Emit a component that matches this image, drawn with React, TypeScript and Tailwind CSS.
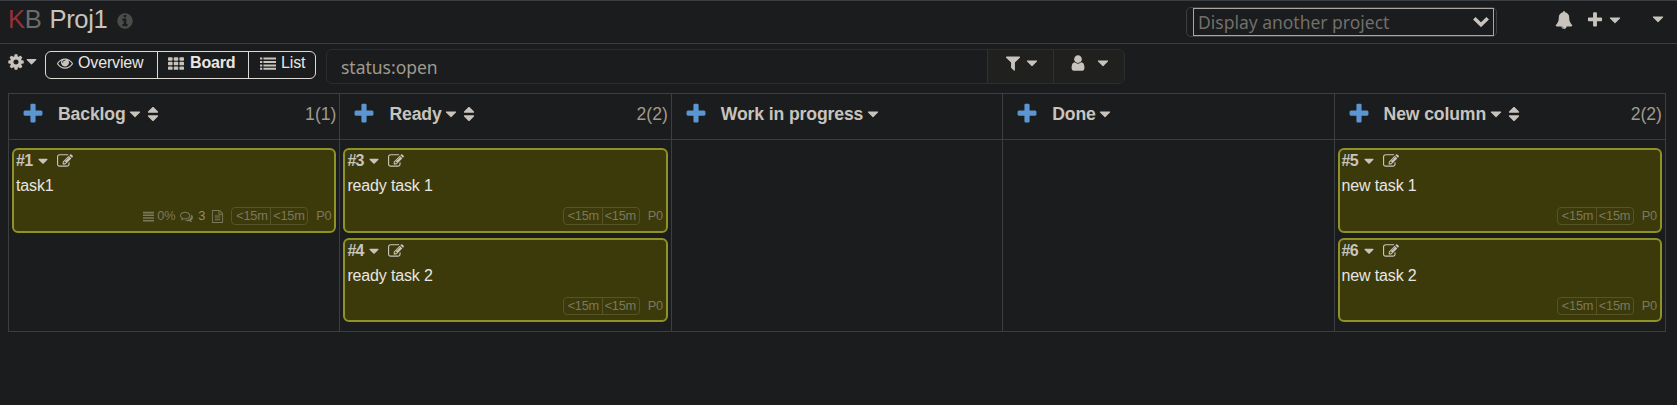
import React from "react";

const P = {
  caret: "M1408 704q0 26-19 45l-448 448q-19 19-45 19t-45-19l-448-448q-19-19-19-45t19-45 45-19h896q26 0 45 19t19 45z",
  plus: "M1600 736v192q0 40-28 68t-68 28h-416v416q0 40-28 68t-68 28h-192q-40 0-68-28t-28-68v-416h-416q-40 0-68-28t-28-68v-192q0-40 28-68t68-28h416v-416q0-40 28-68t68-28h192q40 0 68 28t28 68v416h416q40 0 68 28t28 68z",
  sort: "M1408 1088q0 26-19 45l-448 448q-19 19-45 19t-45-19l-448-448q-19-19-19-45t19-45 45-19h896q26 0 45 19t19 45zm0-384q0 26-19 45t-45 19h-896q-26 0-45-19t-19-45 19-45l448-448q19-19 45-19t45 19l448 448q19 19 19 45z",
  cog: "M1152 896q0-106-75-181t-181-75-181 75-75 181 75 181 181 75 181-75 75-181zm512-109v222q0 12-8 23t-20 13l-185 28q-19 54-39 91 35 50 107 138 10 12 10 25t-9 23q-27 37-99 108t-94 71q-12 0-26-9l-138-108q-44 23-91 38-16 136-29 186-7 28-36 28h-222q-14 0-24.5-8.5t-11.5-21.5l-28-184q-49-16-90-37l-141 107q-10 9-25 9-14 0-25-11-126-114-165-168-7-10-7-23 0-12 8-23 15-21 51-66.5t54-70.5q-27-50-41-99l-183-27q-13-2-21-12.5t-8-23.5v-222q0-12 8-23t19-13l186-28q14-46 39-92-40-57-107-138-10-12-10-24 0-10 9-23 26-36 98.5-107.5t94.5-71.5q13 0 26 10l138 107q44-23 91-38 16-136 29-186 7-28 36-28h222q14 0 24.5 8.5t11.5 21.5l28 184q49 16 90 37l142-107q9-9 24-9 13 0 25 10 129 119 165 170 7 8 7 22 0 12-8 23-15 21-51 66.5t-54 70.5q26 50 41 98l183 28q13 2 21 12.5t8 23.5z",
  eye: "M1664 960q-152-236-381-353 61 104 61 225 0 185-131.5 316.5t-316.5 131.5-316.5-131.5-131.5-316.5q0-121 61-225-229 117-381 353 133 205 333.5 326.5t434.5 121.5 434.5-121.5 333.5-326.5zm-720-384q0-20-14-34t-34-14q-125 0-214.5 89.5t-89.5 214.5q0 20 14 34t34 14 34-14 14-34q0-86 61-147t147-61q20 0 34-14t14-34zm848 384q0 34-20 69-140 230-376.5 368.5t-499.5 138.5-499.5-139-376.5-368q-20-35-20-69t20-69q140-229 376.5-368t499.5-139 499.5 139 376.5 368q20 35 20 69z",
  info: "M1152 1376v-160q0-14-9-23t-23-9h-96v-512q0-14-9-23t-23-9h-320q-14 0-23 9t-9 23v160q0 14 9 23t23 9h96v320h-96q-14 0-23 9t-9 23v160q0 14 9 23t23 9h448q14 0 23-9t9-23zm-128-896v-160q0-14-9-23t-23-9h-192q-14 0-23 9t-9 23v160q0 14 9 23t23 9h192q14 0 23-9t9-23zm640 416q0 209-103 385.5t-279.5 279.5-385.5 103-385.5-103-279.5-279.5-103-385.5 103-385.5 279.5-279.5 385.5-103 385.5 103 279.5 279.5 103 385.5z",
  edit: "M888 1184l116-116-152-152-116 116v56h96v96h56zm440-720q-16-16-33 1l-350 350q-17 17-1 33t33-1l350-350q17-17 1-33zm80 594v190q0 119-84.5 203.5t-203.5 84.5h-832q-119 0-203.5-84.5t-84.5-203.5v-832q0-119 84.5-203.5t203.5-84.5h832q63 0 117 25 15 7 18 23 3 17-9 29l-49 49q-14 14-32 8-23-6-45-6h-832q-66 0-113 47t-47 113v832q0 66 47 113t113 47h832q66 0 113-47t47-113v-126q0-13 9-22l64-64q15-15 35-7t20 29zm-96-738l288 288-672 672h-288v-288zm444 132l-92 92-288-288 92-92q28-28 68-28t68 28l152 152q28 28 28 68t-28 68z",
  bell: "M912 1696q0-16-16-16-59 0-101.5-42.5t-42.5-101.5q0-16-16-16t-16 16q0 73 51.5 124.5t124.5 51.5q16 0 16-16zm816-288q0 52-38 90t-90 38h-448q0 106-75 181t-181 75-181-75-75-181h-448q-52 0-90-38t-38-90q50-42 91-88t85-119.5 74.5-158.5 50-206 19.5-260q0-152 117-282.5t307-158.5q-8-19-8-39 0-40 28-68t68-28 68 28 28 68q0 20-8 39 190 28 307 158.5t117 282.5q0 139 19.5 260t50 206 74.5 158.5 85 119.5 91 88z",
  filter: "M1595 295q17 41-14 70l-493 493v742q0 42-39 59-13 5-25 5-27 0-45-19l-256-256q-19-19-19-45v-486l-493-493q-31-29-14-70 17-39 59-39h1280q42 0 59 39z",
  user: "M1536 1399q0 109-62.5 187t-150.5 78h-854q-88 0-150.5-78t-62.5-187q0-85 8.5-160.5t31.5-152 58.5-131 94-89 134.5-34.5q131 128 313 128t313-128q76 0 134.5 34.5t94 89 58.5 131 31.5 152 8.5 160.5zm-256-887q0 159-112.5 271.5t-271.5 112.5-271.5-112.5-112.5-271.5 112.5-271.5 271.5-112.5 271.5 112.5 112.5 271.5z",
  comments: "M704 384q-153 0-286 52t-211.5 141-78.5 191q0 82 53 158t149 132l97 56-35 84q34-20 62-39l44-31 53 10q78 14 153 14 153 0 286-52t211.5-141 78.5-191-78.5-191-211.5-141-286-52zm0-128q191 0 353.5 68.5t256.5 186.5 94 257-94 257-256.5 186.5-353.5 68.5q-86 0-176-16-124 88-278 128-36 9-86 16h-3q-11 0-20.5-8t-11.5-21q-1-3-1-6.5t.5-6.5 2-6l2.5-5 3.5-5.5 4-5 4.5-5 4-4.5q5-6 23-25t26-29.5 22.5-29 25-38.5 20.5-44q-124-72-195-177t-71-224q0-139 94-257t256.5-186.5 353.5-68.5zm822 1169q10 24 20.5 44t25 38.5 22.5 29 26 29.5 23 25q1 1 4 4.5t4.5 5 4 5 3.5 5.5l2.5 5 2 6 .5 6.5-1 6.5q-3 14-13 22t-22 7q-50-7-86-16-154-40-278-128-90 16-176 16-271 0-472-132 58 4 88 4 161 0 309-45t264-129q125-92 192-212t67-254q0-77-23-152 129 71 204 178t75 230q0 120-71 224.5t-195 176.5z",
  file: "M1596 380q28 28 48 76t20 88v1152q0 40-28 68t-68 28h-1344q-40 0-68-28t-28-68v-1600q0-40 28-68t68-28h896q40 0 88 20t76 48zm-444-244v376h376q-10-29-22-41l-313-313q-12-12-41-22zm384 1528v-1024h-416q-40 0-68-28t-28-68v-416h-768v1536h1280zm-1024-864q0-14 9-23t23-9h704q14 0 23 9t9 23v64q0 14-9 23t-23 9h-704q-14 0-23-9t-9-23v-64zm736 224q14 0 23 9t9 23v64q0 14-9 23t-23 9h-704q-14 0-23-9t-9-23v-64q0-14 9-23t23-9h704zm0 256q14 0 23 9t9 23v64q0 14-9 23t-23 9h-704q-14 0-23-9t-9-23v-64q0-14 9-23t23-9h704z",
  th: "M96 256h320q96 0 96 96v192q0 96-96 96h-320q-96 0-96-96v-192q0-96 96-96zM736 256h320q96 0 96 96v192q0 96-96 96h-320q-96 0-96-96v-192q0-96 96-96zM1376 256h320q96 0 96 96v192q0 96-96 96h-320q-96 0-96-96v-192q0-96 96-96zM96 768h320q96 0 96 96v192q0 96-96 96h-320q-96 0-96-96v-192q0-96 96-96zM736 768h320q96 0 96 96v192q0 96-96 96h-320q-96 0-96-96v-192q0-96 96-96zM1376 768h320q96 0 96 96v192q0 96-96 96h-320q-96 0-96-96v-192q0-96 96-96zM96 1280h320q96 0 96 96v192q0 96-96 96h-320q-96 0-96-96v-192q0-96 96-96zM736 1280h320q96 0 96 96v192q0 96-96 96h-320q-96 0-96-96v-192q0-96 96-96zM1376 1280h320q96 0 96 96v192q0 96-96 96h-320q-96 0-96-96v-192q0-96 96-96z",
  list: "M0 288h256v224h-256zM384 288h1408v224h-1408zM0 672h256v224h-256zM384 672h1408v224h-1408zM0 1056h256v224h-256zM384 1056h1408v224h-1408zM0 1440h256v224h-256zM384 1440h1408v224h-1408z",
  lines: "M0 130h1792v260h-1792zM0 570h1792v260h-1792zM0 1010h1792v260h-1792zM0 1450h1792v260h-1792z",
};

function Icon({ name, className = "" }: { name: keyof typeof P; className?: string }) {
  return (
    <svg viewBox="0 0 1792 1792" fill="currentColor" className={`shrink-0 overflow-visible ${className}`}>
      <path d={P[name]} />
    </svg>
  );
}

function Card({ id, title, details }: { id: number; title: string; details?: boolean }) {
  return (
    <article className="flex h-[85px] flex-col rounded-[6px] border-2 border-[#8f9326] bg-[#3c3a0a] px-[2px] even:h-[84px]">
      <div className="flex h-[22px] items-center text-[#c8c4bd]">
        <span className="w-[18px] text-[16px] font-bold leading-[20px] tracking-[-0.7px]">#{id}</span>
        <Icon name="caret" className="ml-px size-4" />
        <Icon name="edit" className="ml-[6px] size-4" />
      </div>
      <h3 className="h-[24px] pt-[2px] text-[16px] leading-[23px] tracking-[-0.15px] text-[#e8e6e3]">{title}</h3>
      <div className="mt-[11px] flex h-[18px] items-center justify-end whitespace-nowrap pr-px text-[12.8px] leading-[16px] tracking-[-0.25px] text-[#7b785e]">
        {details && (
          <>
            <Icon name="lines" className="size-[11px]" />
            <span className="ml-[3px]">0%</span>
            <Icon name="comments" className="ml-[5px] size-[13px]" />
            <span className="ml-[5px] text-[#908d76]">3</span>
            <Icon name="file" className="ml-[6px] size-[13px]" />
          </>
        )}
        <span className="ml-[7px] flex h-[18px] w-[77px] items-center rounded-[4px] border border-[#57542a]">
          <span className="w-[39px] border-r border-[#57542a] pl-[4px]">&lt;15m</span>
          <span className="pl-[2px]">&lt;15m</span>
        </span>
        <span className="ml-[8px]">P0</span>
      </div>
    </article>
  );
}

const columns = [
  { name: "Backlog", count: "1(1)", tasks: [{ id: 1, title: "task1", details: true }] },
  { name: "Ready", count: "2(2)", tasks: [{ id: 3, title: "ready task 1" }, { id: 4, title: "ready task 2" }] },
  { name: "Work in progress", tasks: [] },
  { name: "Done", tasks: [] },
  { name: "New column", count: "2(2)", tasks: [{ id: 5, title: "new task 1" }, { id: 6, title: "new task 2" }] },
] as { name: string; count?: string; tasks: { id: number; title: string; details?: boolean }[] }[];

export default function App() {
  return (
    <div className="h-[405px] w-[1677px] overflow-hidden bg-[#1a1c1d] font-['Liberation_Sans',Arial,sans-serif] text-[#c8c4bd]">
      <header className="flex h-[44px] items-start border-y border-[#3c3f41] pl-[8px]">
        <h1 className="flex h-[36px] items-center text-[25.6px] leading-[36px] tracking-[-0.35px]">
          <span className="text-[#983036]">K</span>
          <span className="text-[#6b6b69]">B</span>
          <span className="ml-[8px]">Proj1</span>
          <Icon name="info" className="ml-[9px] mt-[4px] size-[18px] text-[#4b4b4a]" />
        </h1>
        <div className="ml-auto mt-[6px] flex h-[30px] w-[311px] rounded-[5px] border border-[#3c3f41] pl-[6px]">
          <div className="flex h-[28px] w-[301px] items-center justify-between border border-[#aaa7a1] pl-[4px] pr-[4px] font-['Noto_Sans',sans-serif] text-[17.5px] tracking-[-0.01px] text-[#716f6b]">
            <span>Display another project</span>
            <svg viewBox="0 0 16 10" className="h-[10px] w-[16px] text-[#c8c4bd]" fill="none" stroke="currentColor" strokeWidth="3.6">
              <path d="M1.3 1.3L8 7.7L14.7 1.3" />
            </svg>
          </div>
        </div>
        <div className="ml-[58px] flex h-[37px] w-[122px] items-center">
          <Icon name="bell" className="size-[18px]" />
          <Icon name="plus" className="ml-[13px] size-[18px]" />
          <Icon name="caret" className="ml-[2px] size-[18px]" />
          <Icon name="caret" className="mb-[2px] ml-[25px] size-[18px]" />
        </div>
      </header>

      <div className="flex h-[49px] items-start pl-[7px] pt-[5px]">
        <div className="flex h-[25px] w-[38px] items-center">
          <Icon name="cog" className="size-[18px]" />
          <Icon name="caret" className="-ml-[2px] size-[17px]" />
        </div>
        <nav className="mt-[2px] flex h-[28px] w-[271px] rounded-[6px] border border-[#dedbd6] text-[16px] leading-[22px] tracking-[-0.15px] text-[#e8e6e3]">
          <span className="flex h-[21px] w-[111px] items-center pl-[11px]">
            <Icon name="eye" className="mr-[5px] size-4 text-[#c8c4bd]" />Overview
          </span>
          <span className="flex h-[26px] w-[91px] items-center border-l border-[#dedbd6] pb-[5px] pl-[10px] font-bold">
            <Icon name="th" className="mr-[6px] size-4 text-[#c8c4bd]" />Board
          </span>
          <span className="flex h-[26px] w-[67px] items-center border-l border-[#dedbd6] pb-[5px] pl-[11px]">
            <Icon name="list" className="mr-[5px] size-4 text-[#c8c4bd]" />List
          </span>
        </nav>
        <div className="ml-[10px] flex h-[35px] w-[799px] overflow-hidden rounded-[6px] border border-[#2b2d2f]">
          <div className="flex w-[660px] items-center pl-[14px] pt-[2px] font-['Noto_Sans',sans-serif] text-[17.5px] tracking-[-0.01px] text-[#a09a90]">status:open</div>
          <div className="flex w-[66px] items-start border-l border-[#2f3030] bg-[#20201f] pl-[16px] pt-[4px]">
            <Icon name="filter" className="size-[18px]" />
            <Icon name="caret" className="ml-px size-[18px]" />
          </div>
          <div className="flex flex-1 items-start border-l border-[#2f3030] bg-[#20201f] pl-[15px] pt-[4px]">
            <Icon name="user" className="size-[18px]" />
            <Icon name="caret" className="ml-[7px] size-[18px]" />
          </div>
        </div>
      </div>

      <main className="ml-[8px] grid h-[239px] w-[1658px] grid-cols-5 border-l border-t border-[#3c3f41]">
        {columns.map((c) => (
          <section key={c.name} className="border-b border-r border-[#3c3f41]">
            <div className="flex h-[46px] items-center border-b border-[#3c3f41] pb-[5px] pl-[12px] pr-[3px]">
              <Icon name="plus" className="size-[24px] text-[#5b96d3]" />
              <h2 className="ml-[13px] text-[17.6px] font-bold leading-[24px] tracking-[-0.12px]">{c.name}</h2>
              <Icon name="caret" className="ml-[0.5px] size-[18px]" />
              {c.count && <Icon name="sort" className="size-[18px]" />}
              {c.count && <span className="ml-auto text-[17.6px] text-[#a09a90]">{c.count}</span>}
            </div>
            <div className="flex flex-col gap-[5px] px-[3px] pt-[8px]">
              {c.tasks.map((t) => <Card key={t.id} {...t} />)}
            </div>
          </section>
        ))}
      </main>
    </div>
  );
}
